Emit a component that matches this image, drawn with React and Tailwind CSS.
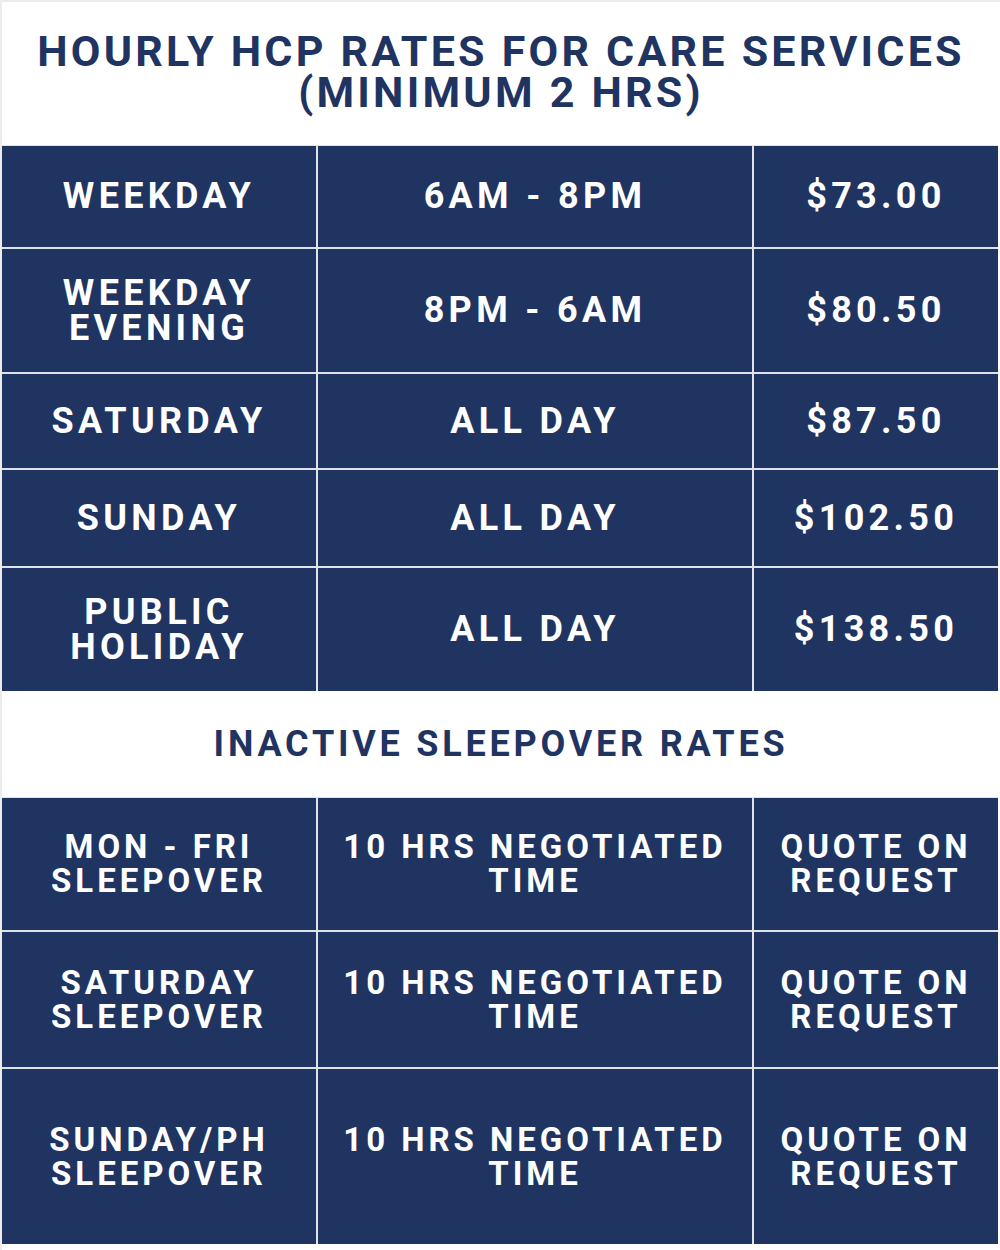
import React from "react";

const hourly = [
  { day: ["WEEKDAY"], time: "6AM - 8PM", rate: "$73.00" },
  { day: ["WEEKDAY", "EVENING"], time: "8PM - 6AM", rate: "$80.50" },
  { day: ["SATURDAY"], time: "ALL DAY", rate: "$87.50" },
  { day: ["SUNDAY"], time: "ALL DAY", rate: "$102.50" },
  { day: ["PUBLIC", "HOLIDAY"], time: "ALL DAY", rate: "$138.50" },
];

const sleepover = [
  { day: ["MON - FRI", "SLEEPOVER"] },
  { day: ["SATURDAY", "SLEEPOVER"] },
  { day: ["SUNDAY/PH", "SLEEPOVER"] },
];

const Cell = ({ lines, small }) => (
  <div
    className={
      small
        ? "bg-[#1f3461] flex flex-col items-center justify-center text-center text-white font-bold text-[33px] leading-[34px] tracking-[0.12em]"
        : "bg-[#1f3461] flex flex-col items-center justify-center text-center text-white font-bold text-[36px] leading-[35px] tracking-[0.12em]"
    }
  >
    {lines.map((l) => (
      <span key={l} className="block">
        {l}
      </span>
    ))}
  </div>
);

const App = () => {
  return (
    <div
      className="w-[1000px] h-[1250px] bg-white border-t-2 border-l-2 border-[#ececec] overflow-hidden"
      style={{ fontFamily: "Roboto, 'Liberation Sans', sans-serif" }}
    >
      {/* Title */}
      <div className="h-[143px] flex flex-col items-center justify-center text-center text-[#1f3461] font-bold text-[43px] leading-[41px] tracking-[0.075em] pb-[4px]">
        <span>HOURLY HCP RATES FOR CARE SERVICES</span>
        <span>(MINIMUM 2 HRS)</span>
      </div>

      {/* Hourly table */}
      <div className="w-[996px] grid grid-cols-[314px_434px_244px] grid-rows-[101px_123px_94px_96px_123px] gap-[2px] bg-[#dfe2e8] border-t border-[#dfe2e8]">
        {hourly.map((r) => (
          <React.Fragment key={r.rate}>
            <Cell lines={r.day} />
            <Cell lines={[r.time]} />
            <Cell lines={[r.rate]} />
          </React.Fragment>
        ))}
      </div>

      {/* Section heading */}
      <div className="h-[106px] flex items-center justify-center text-[#1f3461] font-bold text-[36px] tracking-[0.105em]">
        INACTIVE SLEEPOVER RATES
      </div>

      {/* Sleepover table */}
      <div className="w-[996px] grid grid-cols-[314px_434px_244px] grid-rows-[132px_135px_175px] gap-[2px] bg-[#dfe2e8] border-t border-[#dfe2e8]">
        {sleepover.map((r) => (
          <React.Fragment key={r.day[0]}>
            <Cell small lines={r.day} />
            <Cell small lines={["10 HRS NEGOTIATED", "TIME"]} />
            <Cell small lines={["QUOTE ON", "REQUEST"]} />
          </React.Fragment>
        ))}
      </div>
    </div>
  );
};

export default App;
